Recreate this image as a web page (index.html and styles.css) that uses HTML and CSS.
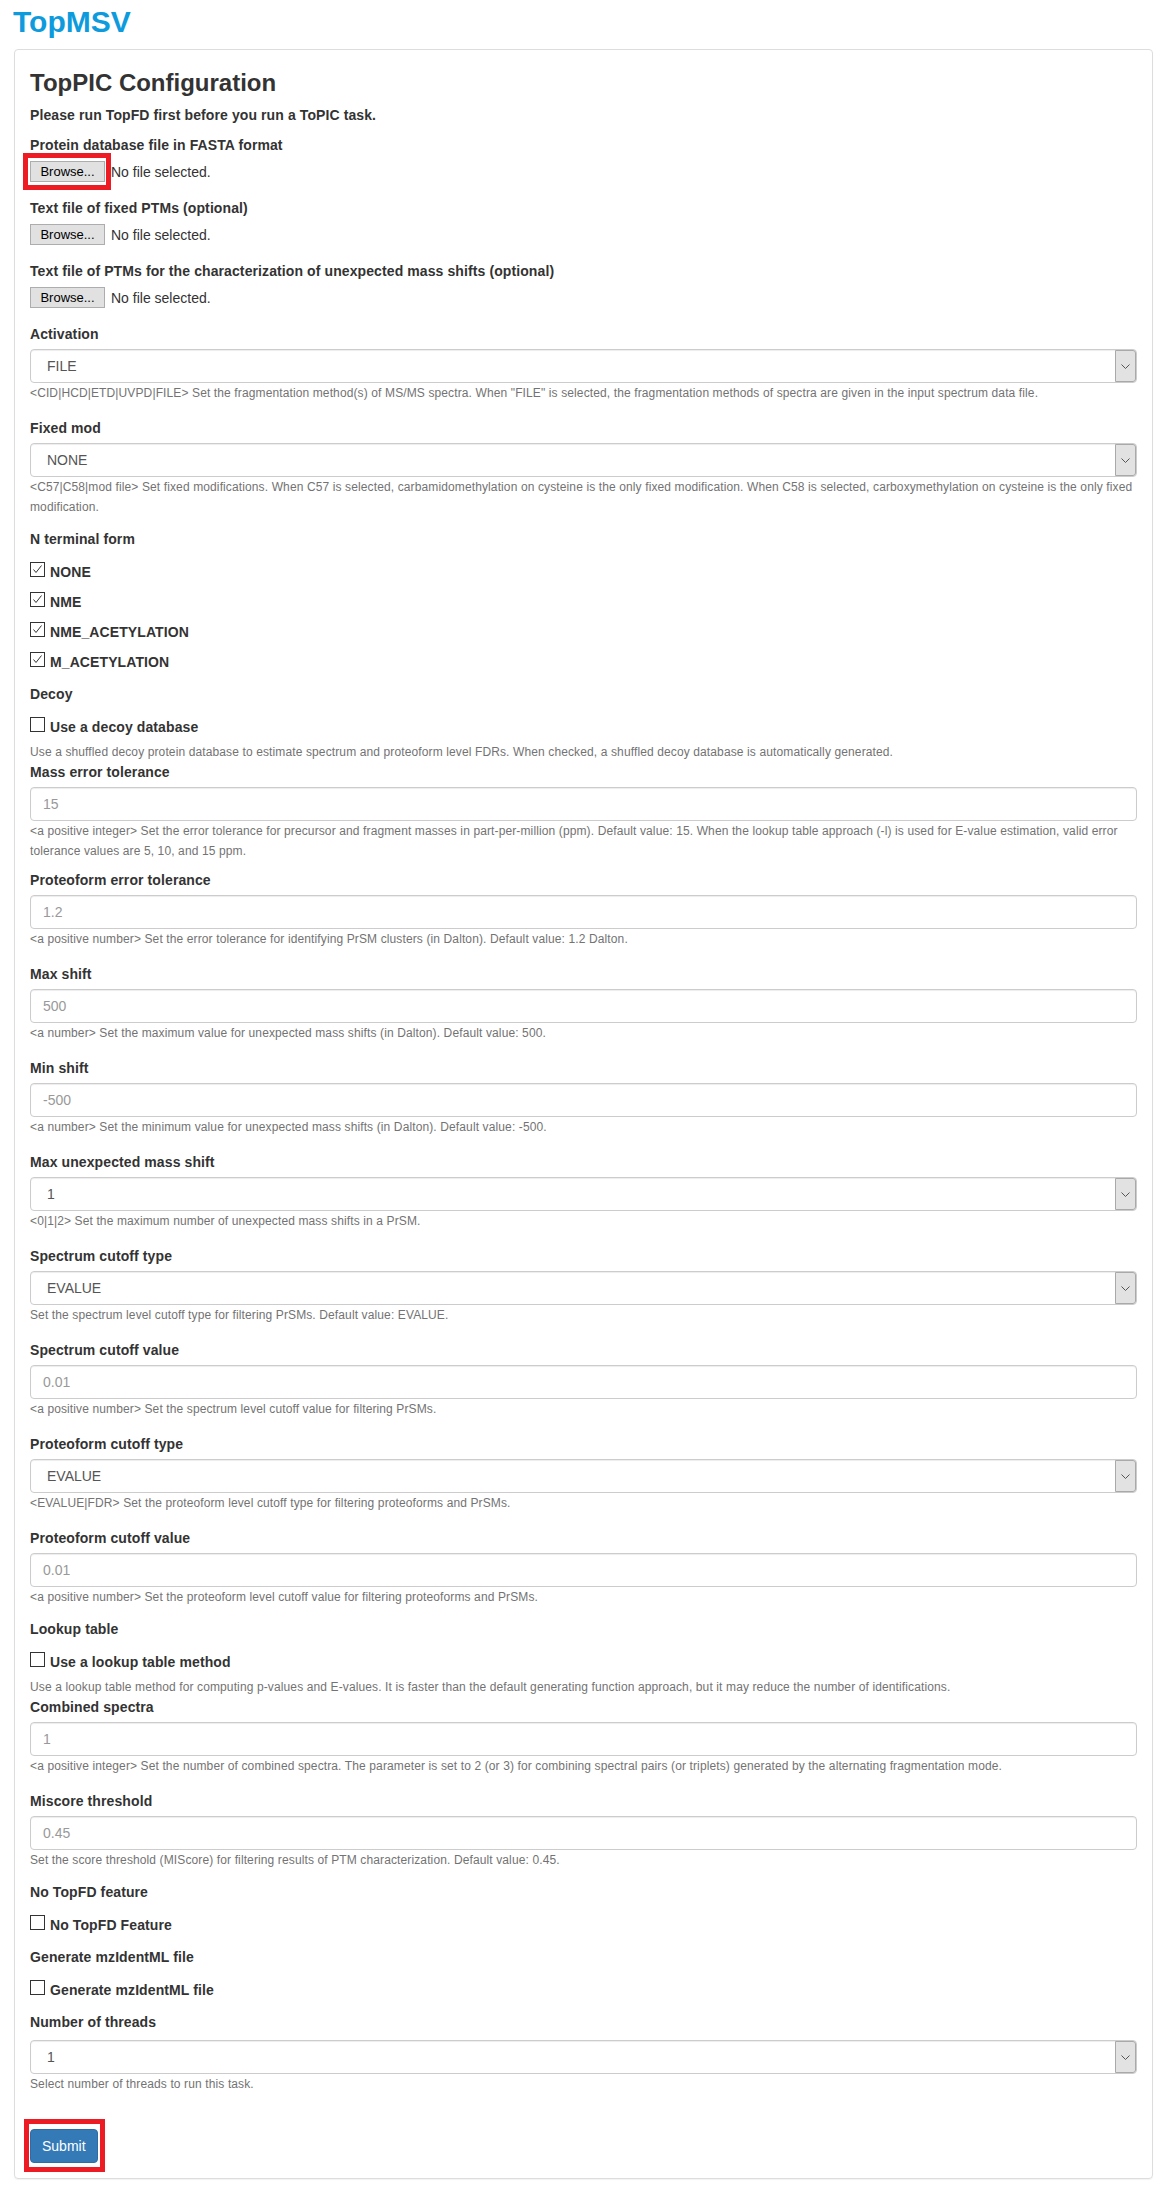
FILE: index.html
```html
<!DOCTYPE html>
<html lang="en">
<head>
<meta charset="utf-8">
<title>TopMSV - TopPIC Configuration</title>
<link rel="stylesheet" href="styles.css">
</head>
<body>
<header class="topbar">
  <h1 class="brand">TopMSV</h1>
</header>

<div class="panel">
  <h2 class="title">TopPIC Configuration</h2>
  <p class="note">Please run TopFD first before you run a ToPIC task.</p>

  <form class="cfg">
    <div class="fg">
      <label class="lbl">Protein database file in FASTA format</label>
      <div class="file">
        <span class="mk mk-browse"><button type="button" class="browse">Browse...</button><span class="ring"></span></span>
        <span class="nofile">No file selected.</span>
      </div>
    </div>

    <div class="fg">
      <label class="lbl">Text file of fixed PTMs (optional)</label>
      <div class="file">
        <button type="button" class="browse">Browse...</button>
        <span class="nofile">No file selected.</span>
      </div>
    </div>

    <div class="fg">
      <label class="lbl">Text file of PTMs for the characterization of unexpected mass shifts (optional)</label>
      <div class="file">
        <button type="button" class="browse">Browse...</button>
        <span class="nofile">No file selected.</span>
      </div>
    </div>

    <div class="fg">
      <label class="lbl">Activation</label>
      <div class="sel"><span class="val">FILE</span><span class="arr"><svg width="9" height="5" viewBox="0 0 9 5"><polyline points="0.5,0.5 4.5,4.5 8.5,0.5" fill="none" stroke="#555" stroke-width="1"/></svg></span></div>
      <small class="help">&lt;CID|HCD|ETD|UVPD|FILE&gt; Set the fragmentation method(s) of MS/MS spectra. When "FILE" is selected, the fragmentation methods of spectra are given in the input spectrum data file.</small>
    </div>

    <div class="fg pre-check">
      <label class="lbl">Fixed mod</label>
      <div class="sel"><span class="val">NONE</span><span class="arr"><svg width="9" height="5" viewBox="0 0 9 5"><polyline points="0.5,0.5 4.5,4.5 8.5,0.5" fill="none" stroke="#555" stroke-width="1"/></svg></span></div>
      <small class="help">&lt;C57|C58|mod file&gt; Set fixed modifications. When C57 is selected, carbamidomethylation on cysteine is the only fixed modification. When C58 is selected, carboxymethylation on cysteine is the only fixed<br>modification.</small>
    </div>

    <div class="fg cbg">
      <label class="lbl">N terminal form</label>
      <label class="cb"><span class="box"><svg width="13" height="13" viewBox="0 0 13 13"><polyline points="2.5,6.5 5,9.5 10.5,2.5" fill="none" stroke="#333" stroke-width="1"/></svg></span>NONE</label>
      <label class="cb"><span class="box"><svg width="13" height="13" viewBox="0 0 13 13"><polyline points="2.5,6.5 5,9.5 10.5,2.5" fill="none" stroke="#333" stroke-width="1"/></svg></span>NME</label>
      <label class="cb"><span class="box"><svg width="13" height="13" viewBox="0 0 13 13"><polyline points="2.5,6.5 5,9.5 10.5,2.5" fill="none" stroke="#333" stroke-width="1"/></svg></span>NME_ACETYLATION</label>
      <label class="cb"><span class="box"><svg width="13" height="13" viewBox="0 0 13 13"><polyline points="2.5,6.5 5,9.5 10.5,2.5" fill="none" stroke="#333" stroke-width="1"/></svg></span>M_ACETYLATION</label>
    </div>

    <div class="fg cbg with-help">
      <label class="lbl">Decoy</label>
      <label class="cb"><span class="box"></span>Use a decoy database</label>
      <small class="help">Use a shuffled decoy protein database to estimate spectrum and proteoform level FDRs. When checked, a shuffled decoy database is automatically generated.</small>
    </div>

    <div class="fg long-help">
      <label class="lbl">Mass error tolerance</label>
      <input class="inp" type="text" placeholder="15">
      <small class="help">&lt;a positive integer&gt; Set the error tolerance for precursor and fragment masses in part-per-million (ppm). Default value: 15. When the lookup table approach (-l) is used for E-value estimation, valid error<br>tolerance values are 5, 10, and 15 ppm.</small>
    </div>

    <div class="fg">
      <label class="lbl">Proteoform error tolerance</label>
      <input class="inp" type="text" placeholder="1.2">
      <small class="help">&lt;a positive number&gt; Set the error tolerance for identifying PrSM clusters (in Dalton). Default value: 1.2 Dalton.</small>
    </div>

    <div class="fg">
      <label class="lbl">Max shift</label>
      <input class="inp" type="text" placeholder="500">
      <small class="help">&lt;a number&gt; Set the maximum value for unexpected mass shifts (in Dalton). Default value: 500.</small>
    </div>

    <div class="fg">
      <label class="lbl">Min shift</label>
      <input class="inp" type="text" placeholder="-500">
      <small class="help">&lt;a number&gt; Set the minimum value for unexpected mass shifts (in Dalton). Default value: -500.</small>
    </div>

    <div class="fg">
      <label class="lbl">Max unexpected mass shift</label>
      <div class="sel"><span class="val">1</span><span class="arr"><svg width="9" height="5" viewBox="0 0 9 5"><polyline points="0.5,0.5 4.5,4.5 8.5,0.5" fill="none" stroke="#555" stroke-width="1"/></svg></span></div>
      <small class="help">&lt;0|1|2&gt; Set the maximum number of unexpected mass shifts in a PrSM.</small>
    </div>

    <div class="fg">
      <label class="lbl">Spectrum cutoff type</label>
      <div class="sel"><span class="val">EVALUE</span><span class="arr"><svg width="9" height="5" viewBox="0 0 9 5"><polyline points="0.5,0.5 4.5,4.5 8.5,0.5" fill="none" stroke="#555" stroke-width="1"/></svg></span></div>
      <small class="help">Set the spectrum level cutoff type for filtering PrSMs. Default value: EVALUE.</small>
    </div>

    <div class="fg">
      <label class="lbl">Spectrum cutoff value</label>
      <input class="inp" type="text" placeholder="0.01">
      <small class="help">&lt;a positive number&gt; Set the spectrum level cutoff value for filtering PrSMs.</small>
    </div>

    <div class="fg">
      <label class="lbl">Proteoform cutoff type</label>
      <div class="sel"><span class="val">EVALUE</span><span class="arr"><svg width="9" height="5" viewBox="0 0 9 5"><polyline points="0.5,0.5 4.5,4.5 8.5,0.5" fill="none" stroke="#555" stroke-width="1"/></svg></span></div>
      <small class="help">&lt;EVALUE|FDR&gt; Set the proteoform level cutoff type for filtering proteoforms and PrSMs.</small>
    </div>

    <div class="fg pre-check">
      <label class="lbl">Proteoform cutoff value</label>
      <input class="inp" type="text" placeholder="0.01">
      <small class="help">&lt;a positive number&gt; Set the proteoform level cutoff value for filtering proteoforms and PrSMs.</small>
    </div>

    <div class="fg cbg with-help">
      <label class="lbl">Lookup table</label>
      <label class="cb"><span class="box"></span>Use a lookup table method</label>
      <small class="help">Use a lookup table method for computing p-values and E-values. It is faster than the default generating function approach, but it may reduce the number of identifications.</small>
    </div>

    <div class="fg">
      <label class="lbl">Combined spectra</label>
      <input class="inp" type="text" placeholder="1">
      <small class="help">&lt;a positive integer&gt; Set the number of combined spectra. The parameter is set to 2 (or 3) for combining spectral pairs (or triplets) generated by the alternating fragmentation mode.</small>
    </div>

    <div class="fg pre-check">
      <label class="lbl">Miscore threshold</label>
      <input class="inp" type="text" placeholder="0.45">
      <small class="help">Set the score threshold (MIScore) for filtering results of PTM characterization. Default value: 0.45.</small>
    </div>

    <div class="fg cbg">
      <label class="lbl">No TopFD feature</label>
      <label class="cb"><span class="box"></span>No TopFD Feature</label>
    </div>

    <div class="fg cbg">
      <label class="lbl">Generate mzIdentML file</label>
      <label class="cb"><span class="box"></span>Generate mzIdentML file</label>
    </div>

    <div class="fg">
      <label class="lbl spaced">Number of threads</label>
      <div class="sel"><span class="val">1</span><span class="arr"><svg width="9" height="5" viewBox="0 0 9 5"><polyline points="0.5,0.5 4.5,4.5 8.5,0.5" fill="none" stroke="#555" stroke-width="1"/></svg></span></div>
      <small class="help">Select number of threads to run this task.</small>
    </div>

    <div class="actions">
      <span class="mk mk-submit"><button type="button" class="submit">Submit</button><span class="ring"></span></span>
    </div>
  </form>
</div>
</body>
</html>
```
FILE: styles.css
```css
* { box-sizing: border-box; }

html, body {
  margin: 0;
  padding: 0;
  background: #fff;
}

body {
  font-family: "Liberation Sans", Arial, Helvetica, sans-serif;
  font-size: 14px;
  line-height: 20px;
  color: #333;
}

.topbar {
  height: 49px;
  padding: 5px 13px 0;
}

.brand {
  margin: 0;
  font-size: 30px;
  line-height: 33px;
  font-weight: bold;
  color: #0e9bdd;
}

.panel {
  margin: 0 14px 16px;
  padding: 15px;
  border: 1px solid #ddd;
  border-radius: 4px;
  box-shadow: 0 1px 1px rgba(0, 0, 0, 0.05);
}

.title {
  margin: 5px 0 9px;
  font-size: 24px;
  line-height: 26px;
  font-weight: bold;
}

.note {
  margin: 0 0 10px;
  font-weight: bold;
  letter-spacing: 0.1px;
}

.cfg { margin: 0; }

.fg { margin-bottom: 15px; }
.fg.pre-check { margin-bottom: 12px; }
.fg.long-help { margin-bottom: 9px; }
.fg.cbg {
  display: flex;
  flex-direction: column;
  margin-bottom: 12px;
}
.fg.cbg.with-help { margin-bottom: 0; }

.lbl {
  display: block;
  margin-bottom: 5px;
  font-weight: bold;
  letter-spacing: 0.1px;
}
.lbl.spaced { margin-bottom: 8px; }
.cbg .lbl { margin-bottom: 3px; }

/* file inputs */
.file {
  display: flex;
  align-items: center;
  height: 23px;
  gap: 6px;
}

.browse {
  display: block;
  width: 75px;
  height: 21px;
  padding: 0;
  font-family: "Liberation Sans", Arial, sans-serif;
  font-size: 13px;
  line-height: 19px;
  color: #000;
  background: #e1e1e1;
  border: 1px solid #adadad;
  border-radius: 0;
}

.nofile { color: #333; }

/* selects */
.sel {
  display: flex;
  height: 34px;
  background: #fff;
  border: 1px solid #ccc;
  border-radius: 4px;
  box-shadow: inset 0 1px 1px rgba(0, 0, 0, 0.075);
}

.sel .val {
  flex: 1;
  padding-left: 16px;
  line-height: 32px;
  color: #555;
}

.sel .arr {
  width: 21px;
  display: flex;
  align-items: center;
  justify-content: center;
  background: #e2e2e2;
  border: 1px solid #a9a9a9;
  border-radius: 0 3px 3px 0;
}

.sel .arr svg { display: block; }

/* text inputs */
.inp {
  display: block;
  width: 100%;
  height: 34px;
  padding: 6px 12px;
  font-family: "Liberation Sans", Arial, sans-serif;
  font-size: 14px;
  line-height: 20px;
  color: #555;
  background: #fff;
  border: 1px solid #ccc;
  border-radius: 4px;
  box-shadow: inset 0 1px 1px rgba(0, 0, 0, 0.075);
}

.inp::placeholder { color: #999; }

/* help text */
.help {
  display: block;
  font-size: 12px;
  line-height: 20px;
  letter-spacing: 0.12px;
  color: #737373;
}

/* checkboxes */
.cb {
  display: block;
  margin-top: 10px;
  font-weight: bold;
  line-height: 20px;
  letter-spacing: 0.1px;
}

.box {
  display: inline-block;
  width: 15px;
  height: 15px;
  margin-right: 5px;
  vertical-align: baseline;
  overflow: hidden;
  border: 1px solid #333;
  background: #fff;
}

.box svg { display: block; }

.cbg .help { margin-top: 5px; }

/* submit */
.actions { margin-top: 35px; }

.submit {
  display: block;
  height: 34px;
  padding: 6px 11px;
  font-family: "Liberation Sans", Arial, sans-serif;
  font-size: 14px;
  line-height: 20px;
  color: #fff;
  background: #337ab7;
  border: 1px solid #2e6da4;
  border-radius: 4px;
}

/* red annotation rings */
.mk {
  position: relative;
  display: inline-block;
}

.mk .ring {
  position: absolute;
  border: 5px solid #ed1c24;
  pointer-events: none;
}

.mk-browse .ring { top: -8px; right: -6px; bottom: -8px; left: -7px; }
.mk-submit .ring { top: -10px; right: -7px; bottom: -9px; left: -6px; }
```
